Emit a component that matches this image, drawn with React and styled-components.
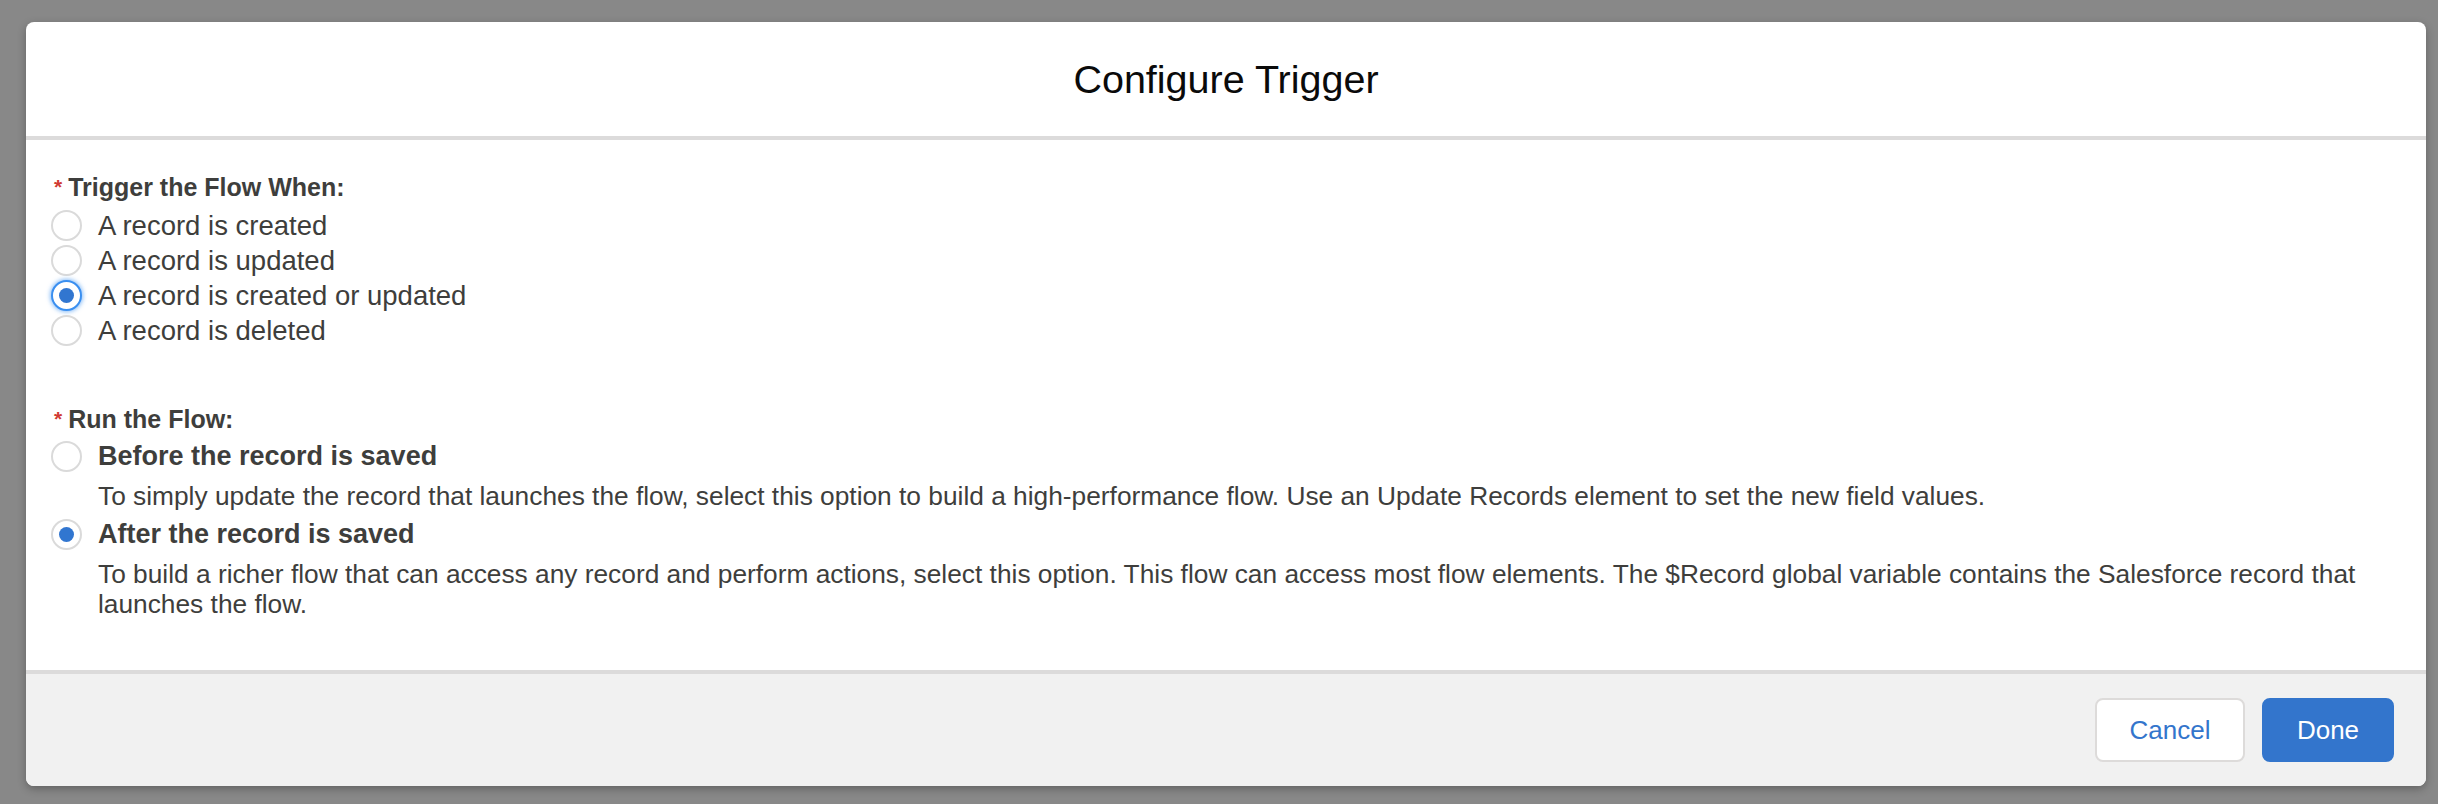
import React from "react";
import styled, { createGlobalStyle } from "styled-components";

const Global = createGlobalStyle`
  html, body { margin: 0; padding: 0; background: #888888; }
  body { font-family: "Liberation Sans", Arial, sans-serif; }
  * { box-sizing: border-box; }
`;

const Backdrop = styled.div`
  width: 2438px;
  height: 804px;
  padding: 22px 12px 18px 26px;
  background: #888888;
`;

const Modal = styled.div`
  width: 2400px;
  height: 764px;
  background: #ffffff;
  border-radius: 8px;
  box-shadow: 0 3px 8px rgba(0, 0, 0, 0.28);
  display: flex;
  flex-direction: column;
  overflow: hidden;
`;

const Header = styled.header`
  height: 118px;
  flex: none;
  border-bottom: 4px solid #dcdbdb;
  display: flex;
  align-items: center;
  justify-content: center;
`;

const Title = styled.h2`
  margin: 0;
  font-size: 39.5px;
  font-weight: 400;
  color: #0a0a0a;
  line-height: 50px;
`;

const Body = styled.div`
  flex: 1;
  padding: 32px 28px 0 24px;
  color: #3e3e3c;
`;

const Group = styled.fieldset`
  border: 0;
  margin: 0 0 ${(p) => p.$gap || 0}px 0;
  padding: 0;
  display: flex;
  flex-direction: column;
`;

const Legend = styled.div`
  display: flex;
  align-items: center;
  height: 30px;
  padding-left: 4px;
  font-size: 25px;
  font-weight: 700;
  color: #3e3e3c;
  margin-bottom: ${(p) => p.$after || 0}px;
`;

const Required = styled.abbr`
  color: #d03a32;
  font-size: 21px;
  font-weight: 700;
  text-decoration: none;
  margin-right: 6px;
  position: relative;
  top: 0px;
`;

const Row = styled.label`
  display: flex;
  align-items: center;
  height: ${(p) => p.$h || 35}px;
  gap: 16px;
  margin-top: ${(p) => p.$mt || 0}px;
`;

const Radio = styled.span`
  flex: none;
  width: 31px;
  height: 31px;
  margin-left: 1px;
  border-radius: 50%;
  border: 2px solid ${(p) => (p.$focused ? "#3a8ff0" : "#dadada")};
  box-shadow: ${(p) =>
    p.$focused ? "0 0 4px 1px rgba(40, 135, 240, 0.55)" : "none"};
  background: #ffffff;
  display: flex;
  align-items: center;
  justify-content: center;

  &::after {
    content: "";
    display: ${(p) => (p.$checked ? "block" : "none")};
    width: 15px;
    height: 15px;
    border-radius: 50%;
    background: #3176d0;
  }
`;

const OptionText = styled.span`
  font-size: ${(p) => (p.$strong ? 27 : 27.5)}px;
  font-weight: ${(p) => (p.$strong ? 700 : 400)};
  color: #3e3e3c;
  line-height: 30px;
`;

const Description = styled.p`
  margin: ${(p) => p.$mt || 0}px 0 0 48px;
  font-size: 26.3px;
  line-height: 30px;
  color: #3e3e3c;
`;

const Footer = styled.footer`
  flex: none;
  height: 116px;
  border-top: 4px solid #dcdbdb;
  background: #f1f1f1;
  display: flex;
  align-items: center;
  justify-content: flex-end;
  gap: 17px;
  padding: 0 32px 0 0;
`;

const Button = styled.button`
  width: ${(p) => (p.$primary ? 132 : 150)}px;
  height: 64px;
  padding: 0;
  border-radius: 8px;
  font-family: "Liberation Sans", Arial, sans-serif;
  font-size: 26px;
  cursor: pointer;
  border: 2px solid ${(p) => (p.$primary ? "#3375cc" : "#dddbda")};
  background: ${(p) => (p.$primary ? "#3375cc" : "#ffffff")};
  color: ${(p) => (p.$primary ? "#ffffff" : "#3375cc")};
`;

const triggers = [
  { label: "A record is created" },
  { label: "A record is updated" },
  { label: "A record is created or updated", checked: true, focused: true },
  { label: "A record is deleted" },
];

export default function App() {
  return (
    <>
      <Global />
      <Backdrop>
        <Modal role="dialog">
          <Header>
            <Title>Configure Trigger</Title>
          </Header>
          <Body>
            <Group $gap={56}>
              <Legend $after={6}>
                <Required title="required">*</Required>
                Trigger the Flow When:
              </Legend>
              {triggers.map((t) => (
                <Row key={t.label}>
                  <Radio $checked={t.checked} $focused={t.focused} />
                  <OptionText>{t.label}</OptionText>
                </Row>
              ))}
            </Group>
            <Group>
              <Legend>
                <Required title="required">*</Required>
                Run the Flow:
              </Legend>
              <Row $h={30} $mt={7}>
                <Radio />
                <OptionText $strong>Before the record is saved</OptionText>
              </Row>
              <Description $mt={10}>
                To simply update the record that launches the flow, select this
                option to build a high-performance flow. Use an Update Records
                element to set the new field values.
              </Description>
              <Row $h={30} $mt={8}>
                <Radio $checked />
                <OptionText $strong>After the record is saved</OptionText>
              </Row>
              <Description $mt={10}>
                To build a richer flow that can access any record and perform
                actions, select this option. This flow can access most flow
                elements. The $Record global variable contains the Salesforce
                record that launches the flow.
              </Description>
            </Group>
          </Body>
          <Footer>
            <Button>Cancel</Button>
            <Button $primary>Done</Button>
          </Footer>
        </Modal>
      </Backdrop>
    </>
  );
}
